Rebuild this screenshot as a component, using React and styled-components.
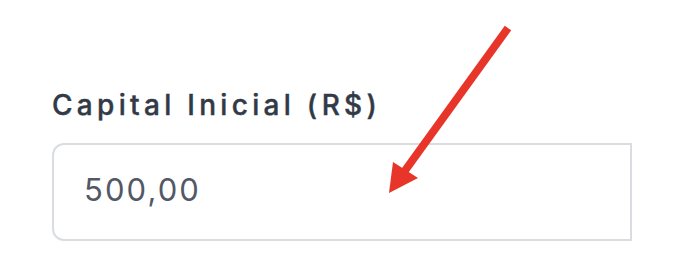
import React from 'react'
import styled, { createGlobalStyle } from 'styled-components'

const GlobalStyles = createGlobalStyle`
    * {
        box-sizing: border-box;
        margin: 0;
        padding: 0;
    }
    body {
        background: #ffffff;
        font-family: Inter, "Noto Sans", sans-serif;
    }
`

const Page = styled.div`
    position: relative;
    width: 688px;
    height: 278px;
    overflow: hidden;
    padding: 87px 0 0 52px;
`

const Field = styled.div`
    display: flex;
    flex-direction: column;
    gap: 20px;
`

const Label = styled.label`
    font-size: 28px;
    line-height: 36px;
    font-weight: 500;
    color: #323947;
    letter-spacing: 4.3px;
    -webkit-text-stroke: 0.4px #323947;
`

const Input = styled.input`
    width: 580px;
    height: 98px;
    border: 2px solid #d9dce1;
    border-radius: 12px 0 0 12px;
    padding: 0 0 6px 30px;
    font-family: Inter, "Noto Sans", sans-serif;
    font-size: 31px;
    letter-spacing: 2.1px;
    color: #525866;
    background: #ffffff;
    outline: none;
`

const Arrow = styled.svg`
    position: absolute;
    left: 0;
    top: 0;
    pointer-events: none;
`

export default function App() {
    return (
        <>
            <GlobalStyles />
            <Page>
                <Field>
                    <Label htmlFor="capital">Capital Inicial (R$)</Label>
                    <Input id="capital" defaultValue="500,00" />
                </Field>
                <Arrow width="688" height="278" viewBox="0 0 688 278">
                    <line x1="508" y1="28" x2="404" y2="172" stroke="#e8352a" strokeWidth="8" />
                    <polygon points="389,193 393,162 418,178" fill="#e8352a" />
                </Arrow>
            </Page>
        </>
    )
}
